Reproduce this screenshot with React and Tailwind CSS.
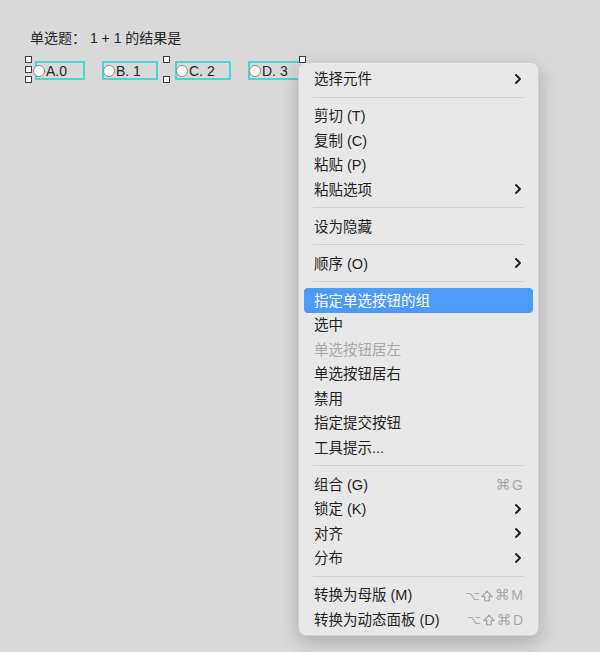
import React from 'react';

const menu = [
    { label: '选择元件', sub: true },
    { sep: true },
    { label: '剪切 (T)' },
    { label: '复制 (C)' },
    { label: '粘贴 (P)' },
    { label: '粘贴选项', sub: true },
    { sep: true },
    { label: '设为隐藏' },
    { sep: true },
    { label: '顺序 (O)', sub: true },
    { sep: true },
    { label: '指定单选按钮的组', active: true },
    { label: '选中' },
    { label: '单选按钮居左', disabled: true },
    { label: '单选按钮居右' },
    { label: '禁用' },
    { label: '指定提交按钮' },
    { label: '工具提示...' },
    { sep: true },
    { label: '组合 (G)', keys: ['⌘'], letter: 'G' },
    { label: '锁定 (K)', sub: true },
    { label: '对齐', sub: true },
    { label: '分布', sub: true },
    { sep: true },
    { label: '转换为母版 (M)', keys: ['⌥', 'shift', '⌘'], letter: 'M' },
    { label: '转换为动态面板 (D)', keys: ['⌥', 'shift', '⌘'], letter: 'D' },
];

const options = [
    { label: 'A.0', w: 'w-[50px]', circle: '-ml-[4px]' },
    { label: 'B. 1', w: 'w-[56px]', circle: '-ml-[1px]' },
    { label: 'C. 2', w: 'w-[56px]', circle: '-ml-[1px]' },
    { label: 'D. 3', w: 'w-[56px]', circle: '-ml-[1px]' },
];

function Chevron() {
    return (
        <svg width="8" height="12" viewBox="0 0 8 12" className="mr-[1px]">
            <path d="M2 2 L6 6 L2 10" fill="none" stroke="#1f1f1f" strokeWidth="1.9" strokeLinecap="round" strokeLinejoin="round" />
        </svg>
    );
}

function ShiftIcon() {
    return (
        <svg width="12" height="12" viewBox="0 0 12 12">
            <path d="M6 1.2 L11 6.5 H8.3 V10.8 H3.7 V6.5 H1 Z" fill="none" stroke="#a8a8a8" strokeWidth="1.3" strokeLinejoin="round" />
        </svg>
    );
}

function Handle({ className }) {
    return <div className={`absolute w-[7px] h-[7px] bg-white border border-[#3a3a3a] ${className}`} />;
}

export default function App() {
    return (
        <div
            className="relative w-[600px] h-[652px] overflow-hidden bg-[#d9d9d9] text-[#262626]"
            style={{ fontFamily: '"Liberation Sans", "Noto Sans CJK SC", sans-serif' }}
        >
            {/* Canvas */}
            <div className="pt-[28px] pl-[30px]">
                <p className="text-[14px] leading-[20px]">单选题： 1 + 1 的结果是</p>
                <div className="flex gap-[17px] mt-[13px] ml-[5px]">
                    {options.map((o) => (
                        <div key={o.label} className={`${o.w} h-[19px] border-2 border-[#47d6d0] flex items-center`}>
                            <span className={`w-[12px] h-[12px] rounded-full bg-white border border-[#8c8c8c] shrink-0 ${o.circle}`} />
                            <span className="text-[14px] leading-none ml-[1px]">{o.label}</span>
                        </div>
                    ))}
                </div>
            </div>

            {/* Selection handles */}
            <Handle className="left-[25px] top-[56px]" />
            <Handle className="left-[25px] top-[66px]" />
            <Handle className="left-[25px] top-[76px]" />
            <Handle className="left-[163px] top-[56px]" />
            <Handle className="left-[163px] top-[76px]" />

            {/* Context menu */}
            <div className="absolute left-[298px] top-[62px] w-[241px] py-[3.5px] px-[5px] rounded-[8px] bg-[#e8e8e8] border border-black/10 shadow-[0_6px_18px_rgba(0,0,0,0.22)]">
                {menu.map((m, i) =>
                    m.sep ? (
                        <div key={i} className="h-[12.5px] flex items-center mx-[9px]">
                            <div className="h-px w-full bg-[#d2d2d2]" />
                        </div>
                    ) : (
                        <div
                            key={i}
                            className={`h-[24.5px] px-[10px] flex items-center justify-between rounded-[4px] text-[14.5px] ${
                                m.active ? 'bg-[#4d9bf8] text-white' : m.disabled ? 'text-[#a9a9a9]' : 'text-[#1f1f1f]'
                            }`}
                        >
                            <span className="pt-[3px]">{m.label}</span>
                            {m.sub && <Chevron />}
                            {m.keys && (
                                <span className="flex items-center gap-[3px] text-[#a8a8a8] pt-[2px]">
                                    {m.keys.map((k, j) =>
                                        k === 'shift' ? (
                                            <span key={j} className="w-[12px] flex justify-center"><ShiftIcon /></span>
                                        ) : (
                                            <span
                                                key={j}
                                                className={`w-[12px] flex justify-center leading-none ${k === '⌘' ? 'text-[15px]' : 'text-[12px]'}`}
                                                style={{ fontFamily: '"DejaVu Sans", sans-serif' }}
                                            >
                                                {k}
                                            </span>
                                        )
                                    )}
                                    <span className="text-[14px]">{m.letter}</span>
                                </span>
                            )}
                        </div>
                    )
                )}
            </div>

            <Handle className="left-[299px] top-[56px]" />
        </div>
    );
}
